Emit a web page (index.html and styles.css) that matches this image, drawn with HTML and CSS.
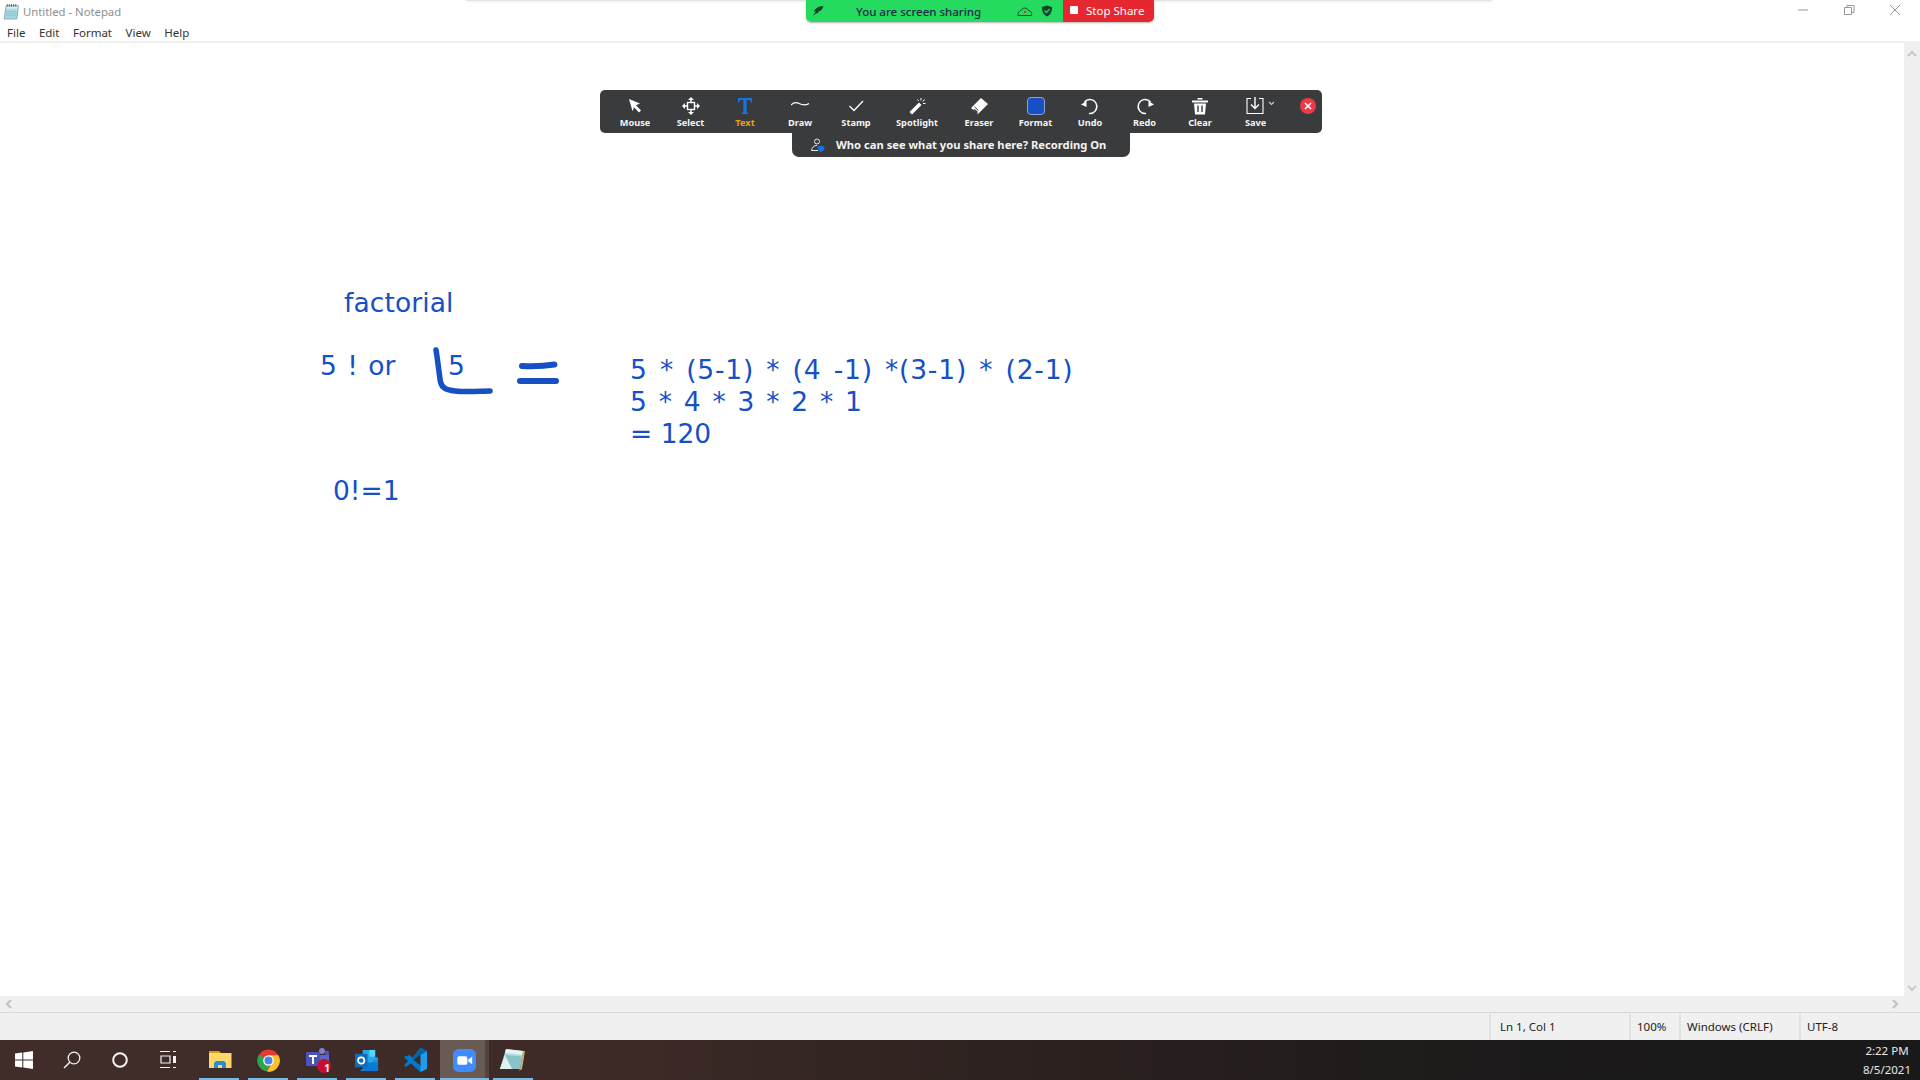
FILE: index.html
```html
<!DOCTYPE html>
<html lang="en">
<head>
<meta charset="utf-8">
<title>Untitled - Notepad</title>
<link rel="stylesheet" href="styles.css">
</head>
<body>
<div class="window">
  <header class="titlebar">
    <svg class="app-icon" viewBox="0 0 16 16" width="17" height="17"><path d="M3 2.500h11.500L13 15H1z" fill="#a9dbe6"/><path d="M3 2.500h11.500l-.4 3H2.600z" fill="#d5eef2"/><path d="M3 2.500h11.500L13 15H1z" fill="none" stroke="#6f9aa6" stroke-width=".7"/><path d="M4 1v2.500M6 1v2.500M8 1v2.500M10 1v2.500M12 1v2.500" stroke="#444" stroke-width=".7"/><path d="M3 8h9.500M3 10h9.500M2.600 12h9.500" stroke="#7fb2c0" stroke-width=".6"/></svg>
    <span class="title-text">Untitled - Notepad</span>
    <div class="win-controls">
      <svg class="win-btn" viewBox="0 0 46 20" width="46" height="20"><path d="M18 10h10" stroke="#999" stroke-width="1"/></svg>
      <svg class="win-btn" viewBox="0 0 46 20" width="46" height="20"><path d="M18.500 7.500h7v7h-7zM21 7V5.500h7v7h-2" fill="none" stroke="#999" stroke-width="1"/></svg>
      <svg class="win-btn" viewBox="0 0 46 20" width="46" height="20"><path d="M18 5l10 10M28 5L18 15" stroke="#999" stroke-width="1"/></svg>
    </div>
  </header>
  <nav class="menubar">
    <span class="menu-item">File</span><span class="menu-item">Edit</span><span class="menu-item">Format</span><span class="menu-item">View</span><span class="menu-item">Help</span>
  </nav>
  <main class="editor-row">
    <div class="editor"></div>
    <div class="vscroll">
      <svg viewBox="0 0 16 12" width="16" height="12"><path d="M4 8l4-4 4 4" fill="none" stroke="#c8c8c8" stroke-width="2"/></svg>
      <svg viewBox="0 0 16 12" width="16" height="12"><path d="M4 4l4 4 4-4" fill="none" stroke="#c8c8c8" stroke-width="2"/></svg>
    </div>
  </main>
  <div class="hscroll">
    <svg viewBox="0 0 12 16" width="12" height="16"><path d="M8 4L4 8l4 4" fill="none" stroke="#c0c0c0" stroke-width="2"/></svg>
    <svg viewBox="0 0 12 16" width="12" height="16"><path d="M4 4l4 4-4 4" fill="none" stroke="#c0c0c0" stroke-width="2"/></svg>
  </div>
  <footer class="statusbar">
    <span class="st st-pos">Ln 1, Col 1</span><span class="st st-zoom">100%</span><span class="st st-eol">Windows (CRLF)</span><span class="st st-enc">UTF-8</span>
  </footer>
  <div class="taskbar">
    <div class="tb-item"><svg viewBox="0 0 18 18" width="18" height="18"><path d="M0 2.600l7.300-1v7H0zM8.300 1.400L18 0v8.600H8.300zM0 9.600h7.300v7l-7.300-1zM8.300 9.600H18V18l-9.700-1.400z" fill="#fff"/></svg></div>
    <div class="tb-item"><svg viewBox="0 0 18 18" width="18" height="18"><circle cx="11" cy="7" r="5.800" fill="none" stroke="#f2f2f2" stroke-width="1.300"/><path d="M6.800 11.200L1 17" stroke="#f2f2f2" stroke-width="1.500"/></svg></div>
    <div class="tb-item"><svg viewBox="0 0 18 18" width="18" height="18"><circle cx="9" cy="9" r="6.800" fill="none" stroke="#f2f2f2" stroke-width="2"/></svg></div>
    <div class="tb-item"><svg viewBox="0 0 18 18" width="18" height="18"><path d="M1 .500h10M1 16.500h10M2 5h9v7H2z" fill="none" stroke="#f2f2f2" stroke-width="1.200"/><path d="M14 .500h3M14 16.500h3" stroke="#f2f2f2" stroke-width="1.200"/><rect x="14" y="5" width="3" height="7" fill="#f2f2f2"/></svg></div>
    <div class="tb-gap"></div>
    <div class="tb-item tb-open">
      <svg viewBox="0 0 24 24" width="24" height="24"><path d="M1 3h10l2 2h-12z" fill="#d9a10c"/><path d="M1 5h22.500v15H1z" fill="#ffd867"/><path d="M6 20v-5l2-2h8l2 2v5h-4v-3h-4v3z" fill="#2a8cd6"/></svg>
    </div>
    <div class="tb-item tb-open">
      <svg viewBox="0 0 24 24" width="23" height="23"><circle cx="12" cy="12" r="11.500" fill="#e33b2e"/><path d="M2 6A11.500 11.500 0 0 0 10 23.300L16 13z" fill="#2da44e"/><path d="M12 6.500h10.300A11.500 11.500 0 0 1 10.500 23.500L16.500 13z" fill="#fbc02d"/><circle cx="12" cy="12" r="5.500" fill="#fff"/><circle cx="12" cy="12" r="4.200" fill="#4a86e8"/></svg>
    </div>
    <div class="tb-item tb-open">
      <svg viewBox="0 0 28 28" width="28" height="28"><circle cx="18" cy="5" r="3" fill="#7b83d8"/><circle cx="23" cy="7" r="2.200" fill="#5059c9"/><path d="M13 9h12v9a5 5 0 0 1-5 5h-2a5 5 0 0 1-5-5z" fill="#5f67c4"/><rect x="2" y="6" width="14" height="14" rx="1" fill="#4b53bc"/><path d="M5 9h8v2H10v7H8v-7H5z" fill="#fff"/><circle cx="20" cy="20" r="7" fill="#c8102e"/></svg>
      <span class="badge">1</span>
    </div>
    <div class="tb-item tb-open">
      <svg viewBox="0 0 26 26" width="25" height="25"><path d="M9 2h13v8h3v12H12l-3-2z" fill="#28a8ea"/><path d="M16 2h6v7h-6z" fill="#50d9ff"/><path d="M25 10v14H9l-3 0 19-14z" fill="#1490df" opacity=".9"/><path d="M9 15h16v9H11z" fill="#0a78d4"/><rect x="1" y="6" width="13" height="14" fill="#0f6cbd"/><circle cx="7.500" cy="13" r="3.300" fill="none" stroke="#fff" stroke-width="1.800"/></svg>
    </div>
    <div class="tb-item tb-open">
      <svg class="vs-icon" viewBox="0 0 24 26" width="24" height="26"><path d="M17.500 1L24 4v18l-6.500 3L7 14z" fill="#1f9cf0"/><path d="M17.500 1L24 4 17.500 8 11 14l-3-1z" fill="#0065a9"/><path d="M6 7.500L17.500 17.500V25L3 12zM1 10l2-1.500L10 14.500 3 20l-2-1.500 4-4.500z" fill="#007acc"/><path d="M17.500 7.500L10.500 13l7 5.500z" fill="#3c2b27"/></svg>
    </div>
    <div class="tb-item tb-active">
      <svg viewBox="0 0 24 24" width="23" height="23"><rect width="24" height="24" rx="6" fill="#3f8cff"/><rect x="4.500" y="7.500" width="10.500" height="9" rx="2" fill="#fff"/><path d="M16 11l4-3v8l-4-3z" fill="#fff"/></svg>
    </div>
    <div class="tb-item tb-open">
      <svg class="np-icon" viewBox="0 0 26 26" width="26" height="26"><path d="M7 2l17 2-3 18H1z" fill="#a9dbe0"/><path d="M7 2l17 2-.6 4L6 6z" fill="#e5f3f3"/><path d="M6 8l17 1.500L21 22H1z" fill="#87c3c7"/><path d="M6 8l7 14H1z" fill="#dff1ef"/><path d="M24 4l-3 18-1 2 3-2 3-18z" fill="#c6b27a"/></svg>
    </div>
    <div class="clock"><span>2:22 PM</span><span>8/5/2021</span></div>
  </div>

  <div class="board">
    <span class="ink ink-factorial">factorial</span>
    <span class="ink ink-five-or">5 ! or</span>
    <span class="ink ink-five">5</span>
    <span class="ink ink-zero">0!=1</span>
    <div class="ink ink-calc"><div class="calc-first">5 * (5-1) * (4 -1) *(3-1) * (2-1)</div><div class="calc-second">5 * 4 * 3 * 2 * 1</div><div>= 120</div></div>
    <svg class="ink-strokes" viewBox="0 0 1920 1080" width="1920" height="1080"><path d="M436 350C438 362 439 373 440.500 382C442 388 446 390 455 391C468 392.500 480 391 490 391" fill="none" stroke="#1650c4" stroke-width="5.500" stroke-linecap="round" stroke-linejoin="round"/><path d="M522 366C532 366.500 545 366 554.500 364.500" fill="none" stroke="#1650c4" stroke-width="6" stroke-linecap="round"/><path d="M520 381H556" fill="none" stroke="#1650c4" stroke-width="6" stroke-linecap="round"/></svg>
  </div>

  <div class="share-shadow"></div>
  <div class="share-bar">
    <div class="share-green">
      <svg class="share-leaf" viewBox="0 0 12 12" width="12" height="12"><path d="M11.500 1C7 1 3.500 3 1.500 6.500l2.500-.3L.5 11.500c2-2.500 4-3.500 6-3.500L6 6.500c3 0 4.500-2.500 5.500-5.500z" fill="#14432a"/></svg>
      <span class="share-label">You are screen sharing</span>
      <svg class="share-cloud" viewBox="0 0 16 12" width="16" height="12"><path d="M1 10.500h13.500C15.500 7.500 13.500 5.500 11.500 5.500 10 2.500 6 2 4.500 5 2.500 5.500 .5 8 1 10.500z" fill="none" stroke="#14532e" stroke-width="1"/><circle cx="8" cy="7" r="1.200" fill="#e5322d"/></svg>
      <svg class="share-shield" viewBox="0 0 12 12" width="12" height="12"><path d="M6 .5l5 1.500c0 5-1.500 8-5 9.500C2.500 10 1 7 1 2z" fill="#14432a"/><path d="M3.500 5.500L5.500 7.500 8.500 4" fill="none" stroke="#24db60" stroke-width="1.200"/></svg>
    </div>
    <div class="share-stop"><span class="stop-square"></span><span class="stop-label">Stop Share</span></div>
  </div>

  <div class="toolbar">
    <div class="tool tool-mouse"><svg viewBox="0 0 18 18" width="18" height="18"><path d="M3 2l11 4.500-4 1.800 5 5.200-2 2-5-5.200-1.500 4z" fill="#fff"/></svg><span>Mouse</span></div>
    <div class="tool tool-select"><svg viewBox="0 0 18 18" width="18" height="18"><path d="M9 0l3 3H6zM9 18l-3-3h6zM0 9l3-3v6zM18 9l-3 3V6z" fill="#fff"/><rect x="5.500" y="5.500" width="7" height="7" fill="none" stroke="#fff" stroke-width="1.400"/><path d="M9 3v3M9 12v3M3 9h3M12 9h3" stroke="#fff" stroke-width="1.400"/></svg><span>Select</span></div>
    <div class="tool tool-text is-on"><svg viewBox="0 0 18 18" width="18" height="18"><path d="M2 1h14v4.500h-1C14.600 3.500 14 3 12.200 3H10.600v11.500c0 1 .5 1.300 1.700 1.400V17H5.700v-1.100c1.200-.1 1.700-.4 1.700-1.400V3H5.800C4 3 3.400 3.500 3 5.500H2z" fill="#1673e6"/></svg><span>Text</span></div>
    <div class="tool tool-draw"><svg viewBox="0 0 18 18" width="18" height="18"><path d="M0 8c3-3 5-3 8-1.500S14 9 18 6.500" fill="none" stroke="#fff" stroke-width="1.200"/></svg><span>Draw</span></div>
    <div class="tool tool-stamp"><svg viewBox="0 0 18 18" width="18" height="18"><path d="M2.500 9l4.500 4.500L16 4" fill="none" stroke="#fff" stroke-width="1.300"/></svg><span>Stamp</span></div>
    <div class="tool tool-spot"><svg viewBox="0 0 18 18" width="18" height="18"><path d="M1.500 15L11 5.500l2.500 2.500L4 17.500z" fill="#fff"/><path d="M13 1v2.500M16.500 2.500l-1.500 2M15 6.500h2.500M9.500 2.500l1.200 1.500" stroke="#fff" stroke-width="1"/></svg><span>Spotlight</span></div>
    <div class="tool tool-eraser"><svg viewBox="0 0 18 18" width="18" height="18"><path d="M11 1l7 6-10 10-7-6z" fill="#fff"/><path d="M5 12.200L8 15l-1 1.500L3 12.500z" fill="#3a3b3c"/><path d="M4.500 9.800L8.500 13.500" stroke="#3a3b3c" stroke-width="1"/></svg><span>Eraser</span></div>
    <div class="tool tool-format"><span class="swatch"></span><span>Format</span></div>
    <div class="tool tool-undo"><svg viewBox="0 0 18 18" width="18" height="18"><path d="M3.500 5A7 7 0 1 1 8 16.500" fill="none" stroke="#fff" stroke-width="1.400"/><path d="M0 7.500L5.500 4v6z" fill="#fff"/></svg><span>Undo</span></div>
    <div class="tool tool-redo"><svg viewBox="0 0 18 18" width="18" height="18"><path d="M14.500 5A7 7 0 1 0 10 16.500" fill="none" stroke="#fff" stroke-width="1.400"/><path d="M18 7.500L12.500 4v6z" fill="#fff"/></svg><span>Redo</span></div>
    <div class="tool tool-clear"><svg viewBox="0 0 18 18" width="18" height="18"><path d="M6.500 2.500V1h5v1.500M1 3.500h16v2H1zM3 6.500h12l-1 11H4z" fill="#fff"/><path d="M7 8.500v6.500M11 8.500v6.500" stroke="#3a3b3c" stroke-width="1.400"/></svg><span>Clear</span></div>
    <div class="tool tool-save"><svg viewBox="0 0 30 18" width="30" height="18"><path d="M5 1.500H1v15h16v-15h-4" fill="none" stroke="#fff" stroke-width="1.100"/><path d="M9 0v11M5 7.500l4 4 4-4" fill="none" stroke="#fff" stroke-width="1.400"/><path d="M23 5l2.500 2.500L28 5" fill="none" stroke="#ccc" stroke-width="1.100"/></svg><span>Save</span></div>
    <div class="tool-close"><svg viewBox="0 0 16 16" width="16" height="16"><circle cx="8" cy="8" r="8" fill="#ee3a46"/><path d="M5 5l6 6M11 5l-6 6" stroke="#fff" stroke-width="1.600"/></svg></div>
  </div>
  <div class="who-bar">
    <svg viewBox="0 0 14 14" width="14" height="14"><circle cx="6" cy="3.500" r="2.500" fill="none" stroke="#e8e8e8" stroke-width="1"/><path d="M.5 12.500C1 9 3 7.500 6 7.500M.5 12.500H7" fill="none" stroke="#e8e8e8" stroke-width="1"/><path d="M10 7.500l3.500 1.200c0 2.800-1 4.300-3.500 5.300-2.500-1-3.500-2.500-3.500-5.300z" fill="#1673e6"/></svg>
    <span>Who can see what you share here? Recording On</span>
  </div>
</div>
</body>
</html>
```
FILE: styles.css
```css
* { box-sizing: border-box; }
html, body { margin: 0; padding: 0; height: 100%; overflow: hidden; background: #fff; }
body { font-family: "Noto Sans", "Open Sans", sans-serif; }

.window { position: relative; display: flex; flex-direction: column; width: 1920px; height: 1080px; overflow: hidden; }

.titlebar { display: flex; align-items: center; height: 22px; padding-left: 3px; flex: none; }
.app-icon { flex: none; }
.title-text { margin-left: 3px; font-size: 11.3px; color: #8f8f8f; }
.win-controls { display: flex; margin-left: auto; padding-right: 2px; align-self: flex-start; }
.win-btn { display: block; }

.menubar { display: flex; align-items: center; height: 21px; padding: 2px 0 0 7px; gap: 13.500px; border-bottom: 2px solid #f0f0f0; flex: none; font-size: 11.5px; color: #333; }

.editor-row { display: flex; flex: 1; min-height: 0; }
.editor { flex: 1; background: #fff; }
.vscroll { display: flex; flex-direction: column; justify-content: space-between; width: 16px; background: #f0f0f0; padding: 5px 0 2px; }
.vscroll svg { display: block; }
.hscroll { display: flex; justify-content: space-between; align-items: center; height: 16px; flex: none; background: #f0f0f0; padding: 0 19px 0 3px; }
.statusbar { display: flex; height: 28px; flex: none; background: #f0f0f0; border-top: 1px solid #dadada; font-size: 11.5px; color: #222; padding-left: 1489px; }
.st { display: flex; align-items: center; padding-left: 9px; border-left: 2px solid #e2e2e2; height: 27px; }
.st-pos { width: 140px; }
.st-zoom { width: 50px; padding-left: 6px; }
.st-eol { width: 120px; padding-left: 6px; }
.st-enc { padding-left: 6px; }

.taskbar { display: flex; align-items: stretch; height: 40px; flex: none; background: linear-gradient(90deg, #402c28 0%, #3e2b27 30%, #2b211f 55%, #1c1a1a 78%, #191919 100%); position: relative; }
.tb-item { position: relative; display: flex; align-items: center; justify-content: center; width: 48px; flex: none; }
.tb-gap { width: 3px; flex: none; }
.tb-open, .tb-active { width: 49px; }
.tb-open::after { content: ""; position: absolute; left: 4px; right: 5px; bottom: 0; height: 2px; background: #76b9ed; }
.tb-active { background: #6a5a54; }
.tb-active::before { content: ""; position: absolute; right: 0; top: 0; bottom: 0; width: 4px; background: #54443f; }
.tb-active::after { content: ""; position: absolute; left: 0; right: 0; bottom: 0; height: 2px; background: #76b9ed; }
.np-icon { margin-right: 3px; }
.vs-icon { margin-right: 2px; }
.badge { position: absolute; left: 27px; top: 21px; width: 14px; height: 14px; font-size: 10px; font-weight: 700; line-height: 14px; color: #fff; text-align: center; }
.clock { display: flex; flex-direction: column; align-items: center; justify-content: center; margin-left: auto; padding-right: 9px; font-size: 11.5px; line-height: 19px; color: #e8e8e8; }

.board { position: absolute; left: 0; top: 0; width: 1920px; height: 1080px; pointer-events: none; }
.ink { position: absolute; font-family: "DejaVu Sans", sans-serif; font-size: 26.5px; line-height: 32px; color: #1650c4; white-space: nowrap; }
.ink-factorial { left: 344px; top: 287px; letter-spacing: .1px; }
.ink-five-or { left: 320px; top: 350px; word-spacing: 2px; }
.ink-five { left: 448px; top: 350px; }
.ink-zero { left: 333px; top: 475px; }
.ink-calc { left: 630px; top: 354px; }
.calc-first { word-spacing: 3px; letter-spacing: .8px; }
.calc-second { word-spacing: 3.4px; }
.ink-strokes { position: absolute; left: 0; top: 0; }

.share-shadow { position: absolute; left: 466px; top: 0; width: 1026px; height: 1px; background: #e4e4e4; box-shadow: 0 0 3px #cfcfcf; }
.share-bar { position: absolute; left: 806px; top: 0; display: flex; width: 348px; height: 22px; border-radius: 0 0 5px 5px; overflow: hidden; box-shadow: 0 1px 2px rgba(0,0,0,.3); }
.share-green { display: flex; align-items: center; width: 257px; background: #24db60; padding-left: 6px; }
.share-label { margin-left: 32px; font-size: 11.5px; font-weight: 500; color: #1d2b4a; white-space: nowrap; }
.share-cloud { margin-left: 36px; }
.share-shield { margin-left: 8px; }
.share-stop { display: flex; align-items: center; flex: 1; background: #e5282f; padding: 0 0 2px 7px; }
.stop-square { width: 8px; height: 8px; background: #fff; border-radius: 1px; }
.stop-label { margin-left: 8px; font-size: 11.5px; color: #fff; white-space: nowrap; }

.toolbar { position: absolute; left: 600px; top: 90px; display: flex; align-items: stretch; width: 722px; height: 43px; padding-left: 7px; background: #3a3b3c; border-radius: 5px; }
.tool { display: flex; flex-direction: column; align-items: center; justify-content: flex-start; padding-top: 7px; flex: none; }
.tool svg { display: block; flex: none; }
.tool span:last-child { margin-top: 1px; font-family: "Noto Sans", sans-serif; font-size: 9.2px; font-weight: 700; line-height: 13px; color: #f4f4f4; white-space: nowrap; }
.tool-mouse { width: 56px; }
.tool-select { width: 55px; }
.tool-text { width: 54px; }
.tool-draw { width: 56px; }
.tool-stamp { width: 56px; }
.tool-spot { width: 66px; }
.tool-eraser { width: 58px; }
.tool-format { width: 55px; }
.tool-undo { width: 54px; }
.tool-redo { width: 55px; }
.tool-clear { width: 56px; }
.tool-save { width: 55px; align-items: flex-start; padding-left: 18px; }
.tool-save span:last-child { margin-left: -1px; }
.tool.is-on span:last-child { color: #f0a20a; }
.swatch { display: block; width: 18px; height: 18px; background: #1650c4; border: 1px solid #8ea3cf; border-radius: 4px; flex: none; }
.tool-close { display: flex; align-items: flex-start; padding-top: 8px; padding-left: 17px; }

.who-bar { position: absolute; left: 792px; top: 133px; display: flex; align-items: center; width: 338px; height: 24px; padding: 0 0 1px 19px; background: #3a3b3c; border-radius: 0 0 7px 7px; font-size: 11.2px; font-weight: 700; color: #f4f4f4; white-space: nowrap; }
.who-bar span { margin-left: 11px; }
```
